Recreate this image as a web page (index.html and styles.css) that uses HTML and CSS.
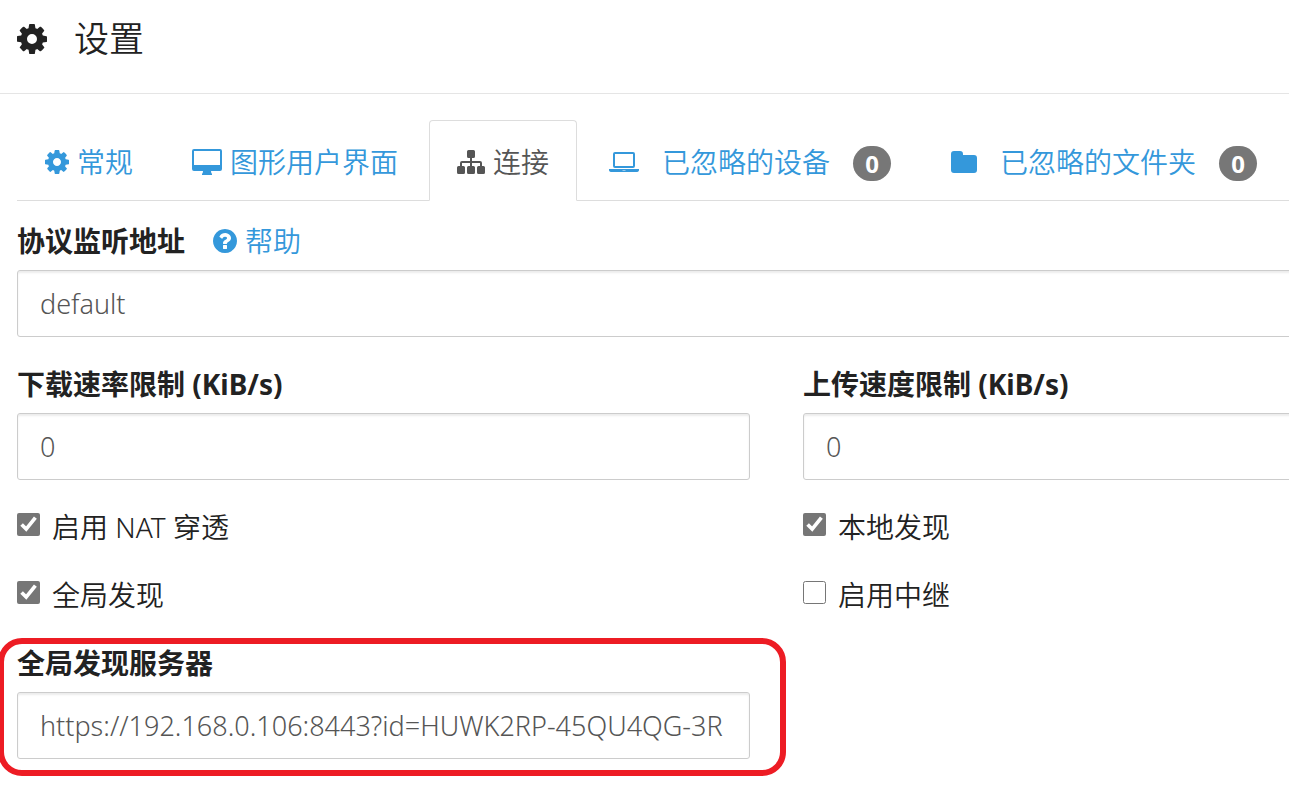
FILE: index.html
```html
<!DOCTYPE html>
<html lang="zh-CN">
<head>
<meta charset="utf-8">
<title>设置</title>
<link rel="stylesheet" href="styles.css">
</head>
<body>
<svg class="sprite" aria-hidden="true">
  <symbol id="cog" viewBox="128 128 1536 1536"><path d="M1152 896q0-106-75-181t-181-75-181 75-75 181 75 181 181 75 181-75 75-181zm512-109v222q0 12-8 23t-20 13l-185 28q-19 54-39 91 35 50 107 138 10 12 10 25t-9 23q-27 37-99 108t-94 71q-12 0-26-9l-138-108q-44 23-91 38-16 136-29 186-7 28-36 28h-222q-14 0-24.5-8.5t-11.5-21.5l-28-184q-49-16-90-37l-141 107q-10 9-25 9-14 0-25-11-126-114-165-168-7-10-7-23 0-12 8-23 15-21 51-66.5t54-70.5q-27-50-41-99l-183-27q-13-2-21-12.5t-8-23.5v-222q0-12 8-23t19-13l186-28q14-46 39-92-40-57-107-138-10-12-10-24 0-10 9-23 26-36 98.5-107.5t94.5-71.5q13 0 26 10l138 107q44-23 91-38 16-136 29-186 7-28 36-28h222q14 0 24.5 8.5t11.5 21.5l28 184q49 16 90 37l142-107q9-9 24-9 13 0 25 10 129 119 165 170 7 8 7 22 0 12-8 23-15 21-51 66.5t-54 70.5q26 50 41 98l183 28q13 2 21 12.5t8 23.5z"/></symbol>
</svg>
<header class="dialog-header">
  <svg class="icon icon-title"><use href="#cog"/></svg>
  <h1 class="title">设置</h1>
</header>
<main class="dialog-body">
  <nav class="tabs">
    <a class="tab" href="#general"><svg class="icon icon-cog"><use href="#cog"/></svg>常规</a>
    <a class="tab" href="#gui"><svg class="icon icon-desktop" viewBox="0 0 30 26"><path fill-rule="evenodd" d="M2 0h26a2 2 0 0 1 2 2v18a2 2 0 0 1-2 2h-9q0 2 1 3v1H10v-1q1-1 1-3H2a2 2 0 0 1-2-2V2a2 2 0 0 1 2-2zm0 2v14h26V2z"/></svg>图形用户界面</a>
    <a class="tab tab-active" href="#connections" aria-current="page"><svg class="icon icon-sitemap" viewBox="0 0 28 24"><path d="M11.500 0h5q1.500 0 1.500 1.500v5q0 1.500-1.500 1.500H15v3h8q2 0 2 2v3h1.500q1.500 0 1.500 1.500v5q0 1.500-1.500 1.500h-5q-1.500 0-1.500-1.500v-5q0-1.500 1.500-1.500H23v-3h-8v3h1.500q1.500 0 1.500 1.500v5q0 1.500-1.500 1.500h-5q-1.500 0-1.500-1.500v-5q0-1.500 1.500-1.500H13v-3H5v3h1.500Q8 16 8 17.500v5Q8 24 6.500 24h-5Q0 24 0 22.500v-5Q0 16 1.500 16H3v-3q0-2 2-2h8V8h-1.500Q10 8 10 6.500v-5Q10 0 11.500 0z"/></svg>连接</a>
    <a class="tab tab-wide" href="#ignored-devices"><svg class="icon icon-laptop" viewBox="0 0 30 20"><path fill-rule="evenodd" d="M6 0h18a2 2 0 0 1 2 2v12a2 2 0 0 1-2 2H6a2 2 0 0 1-2-2V2a2 2 0 0 1 2-2zm0 2v12h18V2zM0 17h30v1q0 2-3 2H3q-3 0-3-2zm13.500 1v.6h3V18z"/></svg>已忽略的设备<span class="badge">0</span></a>
    <a class="tab tab-wide" href="#ignored-folders"><svg class="icon icon-folder" viewBox="0 0 26 22"><path d="M3 0h6q3 0 3 3v1h11q3 0 3 3v12q0 3-3 3H3q-3 0-3-3V3q0-3 3-3z"/></svg>已忽略的文件夹<span class="badge">0</span></a>
  </nav>
  <form class="form">
    <div class="field field-bleed">
      <div class="label-row">
        <label class="label" for="listen">协议监听地址</label>
        <a class="help" href="#help"><svg class="icon icon-help" viewBox="128 128 1536 1536"><path d="M1024 1376v-192q0-14-9-23t-23-9h-192q-14 0-23 9t-9 23v192q0 14 9 23t23 9h192q14 0 23-9t9-23zm256-672q0-88-55.5-163t-138.5-116-170-41q-243 0-371 213-15 24 8 42l132 100q7 6 19 6 16 0 25-12 53-68 86-92 34-24 86-24 48 0 85.5 26t37.5 59q0 38-20 61t-68 45q-63 28-115.5 86.5t-52.5 125.5v36q0 14 9 23t23 9h192q14 0 23-9t9-23q0-19 21.5-49.5t54.5-49.5q32-18 49-28.5t46-35 44.5-48 28-60.5 12.5-81zm384 192q0 209-103 385.5t-279.5 279.5-385.5 103-385.5-103-279.5-279.5-103-385.5 103-385.5 279.5-279.5 385.5-103 385.5 103 279.5 279.5 103 385.5z"/></svg>帮助</a>
      </div>
      <input class="input" id="listen" type="text" value="default">
    </div>
    <div class="columns">
      <div class="field">
        <label class="label" for="down">下载速率限制 (KiB/s)</label>
        <input class="input" id="down" type="text" value="0">
      </div>
      <div class="field field-bleed">
        <label class="label" for="up">上传速度限制 (KiB/s)</label>
        <input class="input" id="up" type="text" value="0">
      </div>
      <label class="check"><input class="box" type="checkbox" checked>启用 NAT 穿透</label>
      <label class="check"><input class="box" type="checkbox" checked>本地发现</label>
      <label class="check"><input class="box" type="checkbox" checked>全局发现</label>
      <label class="check"><input class="box" type="checkbox">启用中继</label>
      <div class="field field-marked">
        <label class="label" for="servers">全局发现服务器</label>
        <input class="input" id="servers" type="text" value="https://192.168.0.106:8443?id=HUWK2RP-45QU4QG-3R">
      </div>
    </div>
  </form>
</main>
</body>
</html>
```
FILE: styles.css
```css
* { box-sizing: border-box; }

body {
  margin: 0;
  background: #fff;
  color: #222;
  font: 350 28px/40px "Noto Sans", "Noto Sans CJK SC", sans-serif;
  overflow-x: hidden;
}

a { color: #3498db; text-decoration: none; }

.sprite { display: none; }
.icon { display: block; flex: none; fill: currentColor; }
.icon-title { width: 30px; height: 30px; }
.icon-cog, .icon-help { width: 24px; height: 24px; }
.icon-desktop { width: 30px; height: 26px; }
.icon-sitemap { width: 28px; height: 24px; }
.icon-laptop { width: 30px; height: 20px; }
.icon-folder { width: 26px; height: 22px; }

.dialog-header {
  display: flex;
  align-items: center;
  gap: 27px;
  padding: 15px 17px 30px;
  border-bottom: 1px solid #e5e5e5;
}

.title { margin: 0; font-size: 35px; font-weight: 350; line-height: 48px; }

.dialog-body { padding: 26px 0 30px 17px; }

.tabs {
  display: flex;
  gap: 3px;
  border-bottom: 1px solid #ddd;
}

.tab {
  display: flex;
  align-items: center;
  gap: 8px;
  flex: none;
  margin-bottom: -1px;
  padding: 21px 27px 18px;
  border: 1px solid transparent;
  border-radius: 4px 4px 0 0;
  white-space: nowrap;
}

.tab-wide { gap: 23px; padding-left: 28px; }

.tab-active {
  border-color: #ddd #ddd #fff;
  background: #fff;
  color: #555;
}

.badge {
  min-width: 38px;
  margin-top: 3px;
  padding: 0 12px;
  border-radius: 18px;
  background: #777;
  color: #fff;
  font-size: 24px;
  font-weight: 700;
  line-height: 35px;
  text-align: center;
}

.form { padding-top: 20px; }

.label-row { display: flex; gap: 28px; }
.help { display: flex; align-items: center; gap: 8px; }

.field { display: flex; flex-direction: column; gap: 9px; min-width: 0; }
.label { font-weight: 700; }

.input {
  width: 100%;
  height: 67px;
  padding: 0 20px 0 22px;
  border: 1px solid #ccc;
  border-radius: 3px;
  background: #fff;
  box-shadow: inset 0 2px 2px rgba(0, 0, 0, 0.075);
  color: #555;
  font: inherit;
  font-size: 27px;
}

.field-bleed { margin-right: -4px; }

.columns {
  display: grid;
  grid-template-columns: 733fr 486fr;
  gap: 27px 53px;
  padding-top: 27px;
}

.check { display: flex; gap: 12px; min-height: 41px; }
.box { width: 23px; height: 23px; margin: 6px 0 0; accent-color: #767676; }

.field-marked { position: relative; }
.field-marked::after {
  content: "";
  position: absolute;
  inset: -5px -36px -17px -19px;
  border: 6px solid #ed1c24;
  border-radius: 24px;
  pointer-events: none;
}
```
